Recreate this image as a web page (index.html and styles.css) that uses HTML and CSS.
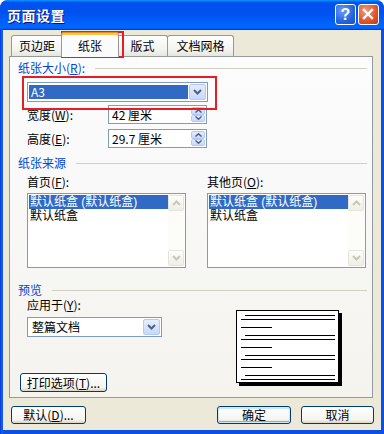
FILE: index.html
```html
<!DOCTYPE html>
<html>
<head>
  <meta charset="utf-8" />
  <title>页面设置</title>
  <link rel="stylesheet" href="styles.css">
</head>
<body>

<div class="window">
  <div class="titlebar">
    <span class="title">页面设置</span>
    <div class="caption-buttons">
      <span class="cap-btn help">?</span>
      <span class="cap-btn close">
        <svg width="19" height="19" viewBox="0 0 19 19"><path d="M5 5 L13 13 M13 5 L5 13" stroke="#fff" stroke-width="2.4" stroke-linecap="square"/></svg>
      </span>
    </div>
  </div>

  <div class="client">
    <div class="tabs">
      <span class="tab first">页边距</span>
      <span class="tab active">纸张</span>
      <span class="tab third">版式</span>
      <span class="tab fourth">文档网格</span>
    </div>

    <div class="panel">
      <div class="group-title"><span>纸张大小(<u>R</u>):</span></div>
      <div class="combo paper-size">
        <span class="combo-text selected">A3</span>
        <span class="drop-btn"><svg width="9" height="6" viewBox="0 0 9 6"><path d="M1 1 L4.5 4.5 L8 1" fill="none" stroke="#4D6185" stroke-width="2"/></svg></span>
      </div>

      <div class="field-row first-row">
        <span class="field-label">宽度(<u>W</u>):</span>
        <div class="spin">
          <span class="spin-value">42 厘米</span>
          <span class="spin-btns">
            <span class="spin-btn"><svg width="7" height="4" viewBox="0 0 7 4"><path d="M0.5 3.5 L3.5 0.8 L6.5 3.5" fill="none" stroke="#4D6185" stroke-width="1.5"/></svg></span>
            <span class="spin-btn"><svg width="7" height="4" viewBox="0 0 7 4"><path d="M0.5 0.5 L3.5 3.2 L6.5 0.5" fill="none" stroke="#4D6185" stroke-width="1.5"/></svg></span>
          </span>
        </div>
      </div>
      <div class="field-row">
        <span class="field-label">高度(<u>E</u>):</span>
        <div class="spin">
          <span class="spin-value">29.7 厘米</span>
          <span class="spin-btns">
            <span class="spin-btn"><svg width="7" height="4" viewBox="0 0 7 4"><path d="M0.5 3.5 L3.5 0.8 L6.5 3.5" fill="none" stroke="#4D6185" stroke-width="1.5"/></svg></span>
            <span class="spin-btn"><svg width="7" height="4" viewBox="0 0 7 4"><path d="M0.5 0.5 L3.5 3.2 L6.5 0.5" fill="none" stroke="#4D6185" stroke-width="1.5"/></svg></span>
          </span>
        </div>
      </div>

      <div class="group-title source-title"><span>纸张来源</span></div>
      <div class="sources">
        <div class="source">
          <div class="caption">首页(<u>F</u>):</div>
          <div class="listbox">
            <div class="items">
              <div class="item selected">默认纸盒 (默认纸盒)</div>
              <div class="item">默认纸盒</div>
            </div>
            <div class="vscroll">
              <span class="sb-btn"><svg width="9" height="6" viewBox="0 0 9 6"><path d="M1 5 L4.5 1.5 L8 5" fill="none" stroke="#C9C7BA" stroke-width="2"/></svg></span>
              <span class="sb-btn"><svg width="9" height="6" viewBox="0 0 9 6"><path d="M1 1 L4.5 4.5 L8 1" fill="none" stroke="#C9C7BA" stroke-width="2"/></svg></span>
            </div>
          </div>
        </div>
        <div class="source">
          <div class="caption">其他页(<u>O</u>):</div>
          <div class="listbox">
            <div class="items">
              <div class="item selected">默认纸盒 (默认纸盒)</div>
              <div class="item">默认纸盒</div>
            </div>
            <div class="vscroll">
              <span class="sb-btn"><svg width="9" height="6" viewBox="0 0 9 6"><path d="M1 5 L4.5 1.5 L8 5" fill="none" stroke="#C9C7BA" stroke-width="2"/></svg></span>
              <span class="sb-btn"><svg width="9" height="6" viewBox="0 0 9 6"><path d="M1 1 L4.5 4.5 L8 1" fill="none" stroke="#C9C7BA" stroke-width="2"/></svg></span>
            </div>
          </div>
        </div>
      </div>

      <div class="group-title preview-title"><span>预览</span></div>
      <div class="preview">
        <div class="preview-left">
          <div class="caption apply-label">应用于(<u>Y</u>):</div>
          <div class="combo apply-combo">
            <span class="combo-text">整篇文档</span>
            <span class="drop-btn"><svg width="9" height="6" viewBox="0 0 9 6"><path d="M1 1 L4.5 4.5 L8 1" fill="none" stroke="#4D6185" stroke-width="2"/></svg></span>
          </div>
          <span class="btn print-btn">打印选项(<u>T</u>)...</span>
        </div>
        <div class="page">
          <svg width="101" height="71" viewBox="0 0 101 71">
            <g stroke="#000" stroke-width="1">
              <path d="M8 4.5 H98 M4 8.5 H98 M4 16.5 H35"/>
              <path d="M8 24.5 H98 M4 28.5 H98 M4 36.5 H35"/>
              <path d="M8 44.5 H98 M4 48.5 H98 M4 56.5 H35"/>
              <path d="M8 64.5 H98 M4 68.5 H98"/>
            </g>
          </svg>
        </div>
      </div>
    </div>

    <div class="footer">
      <span class="btn default-btn">默认(<u>D</u>)...</span>
      <span class="spacer"></span>
      <span class="btn ok-btn">确定</span>
      <span class="btn cancel-btn">取消</span>
    </div>
  </div>

  <!-- red annotation boxes drawn over the dialog -->
  <div class="mark mark-tab"></div>
  <div class="mark mark-combo"></div>
</div>

</body>
</html>
```

FILE: styles.css
```css
* { box-sizing: border-box; }
body {
  margin: 0;
  background: #fff;
  font: 12px "Noto Sans CJK SC", sans-serif;
  color: #000;
}
u {
  text-decoration: underline;
}
.window {
  position: relative;
  width: 384px;
  height: 434px;
  display: flex;
  flex-direction: column;
  background: linear-gradient(to right, #0831D9, #166AEE 2px, #0B4FE3 3px);
  border-radius: 8px 8px 0 0;
  overflow: hidden;
}
.titlebar {
  flex: none;
  height: 30px;
  display: flex;
  align-items: center;
  padding: 0 5px 0 7px;
  background: linear-gradient(#0997FF, #0053EE 8%, #0050EE 40%, #0066FF 88%, #0066FF 93%, #005BFF 95%, #003DD7 96%, #003DD7);
}
.title {
  flex: 1;
  color: #fff;
  font-weight: bold;
  font-size: 14px;
  letter-spacing: 0.5px;
  text-shadow: 1px 1px #0F1089;
}
.caption-buttons {
  display: flex;
  gap: 2px;
  margin-top: -1px;
}
.cap-btn {
  width: 21px;
  height: 21px;
  border: 1px solid #fff;
  border-radius: 3px;
  display: flex;
  align-items: center;
  justify-content: center;
}
.help {
  background: radial-gradient(circle at 35% 30%, #6D9BF8, #2663DE 60%, #1A4FC7);
  color: #fff;
  font: bold 16px "Liberation Sans", sans-serif;
}
.close {
  background: radial-gradient(circle at 35% 30%, #F09A7A, #E0532A 60%, #C23A14);
}
.client {
  flex: 1;
  margin: 0 3px 4px;
  padding: 0 7px 0 6px;
  background: #ECE9D8;
  display: flex;
  flex-direction: column;
}
.tabs {
  height: 26px;
  display: flex;
  align-items: flex-end;
  padding-left: 2px;
}
.tab {
  height: 21px;
  border: 1px solid #919B9C;
  border-bottom: none;
  border-radius: 3px 3px 0 0;
  background: linear-gradient(#FFFFFF, #F3F3EF 70%, #E6E5DD);
  display: flex;
  align-items: center;
  justify-content: center;
  line-height: 14px;
}
.tab.first { width: 52px; }
.tab.third { width: 51px; }
.tab.fourth { width: 67px; margin-left: -1px; }
.tab.active {
  position: relative;
  z-index: 1;
  width: 58px;
  height: 25px;
  margin: 0 -2px -1px;
  background: #FCFCFE;
  border-top-color: #E68B2C;
  box-shadow: inset 0 2px #FFC83C;
  padding-top: 1px;
}
.panel {
  width: 364px;
  height: 342px;
  border: 1px solid #919B9C;
  background: linear-gradient(#FCFCFE, #F4F3EE);
  padding: 4px 0 0 8px;
  display: flex;
  flex-direction: column;
}
.group-title {
  height: 14px;
  line-height: 14px;
  margin-right: 5px;
  display: flex;
  align-items: center;
  color: #0046D5;
}
.group-title::after {
  content: "";
  flex: 1;
  border-top: 1px solid #D0D0BF;
  margin-left: 10px;
}
.combo {
  height: 20px;
  border: 1px solid #7F9DB9;
  background: #fff;
  padding: 1px;
  display: flex;
}
.combo-text {
  flex: 1;
  display: flex;
  align-items: center;
  padding-left: 2px;
  margin: 1px 1px 1px 0;
  line-height: 14px;
}
.combo-text.selected {
  background: #316AC5;
  color: #fff;
}
.drop-btn {
  width: 17px;
  border: 1px solid #B5C8F7;
  border-radius: 2px;
  background: linear-gradient(#E6EEFC, #C8D8FB);
  display: flex;
  align-items: center;
  justify-content: center;
}
.paper-size {
  width: 181px;
  margin: 7px 0 0 9px;
}
.field-row {
  display: flex;
  align-items: center;
  margin: 5px 0 0 9px;
}
.field-row.first-row {
  margin-top: 3px;
}
.field-label {
  width: 81px;
  line-height: 14px;
}
.spin {
  width: 99px;
  height: 19px;
  border: 1px solid #7F9DB9;
  background: #fff;
  display: flex;
}
.spin-value {
  flex: 1;
  display: flex;
  align-items: center;
  padding-left: 3px;
  line-height: 14px;
}
.spin-btns {
  width: 16px;
  padding: 1px;
  display: flex;
  flex-direction: column;
}
.spin-btn {
  flex: 1;
  border: 1px solid #B5C8F7;
  border-radius: 2px;
  background: linear-gradient(#E6EEFC, #C8D8FB);
  display: flex;
  align-items: center;
  justify-content: center;
}
.source-title {
  margin-top: 8px;
}
.sources {
  display: flex;
  gap: 21px;
  margin: 5px 0 0 9px;
}
.source {
  width: 159px;
}
.caption {
  height: 14px;
  line-height: 14px;
}
.listbox {
  height: 75px;
  margin-top: 4px;
  border: 1px solid #7F9DB9;
  background: #fff;
  display: flex;
}
.items {
  flex: 1;
  padding: 1px 0 0 1px;
}
.item {
  height: 14px;
  line-height: 14px;
  font-family: "Liberation Sans", "Noto Sans CJK SC", sans-serif;
  white-space: nowrap;
  padding-left: 1px;
}
.item.selected {
  background: #316AC5;
  color: #fff;
}
.vscroll {
  width: 17px;
  padding: 1px 1px 1px 0;
  display: flex;
  flex-direction: column;
  justify-content: space-between;
  background: #FCFCF9;
}
.sb-btn {
  height: 16px;
  border: 1px solid #E5E4DD;
  border-radius: 2px;
  background: linear-gradient(#FDFDFB, #EFEEE7);
  display: flex;
  align-items: center;
  justify-content: center;
}
.preview-title {
  margin-top: 15px;
}
.preview {
  display: flex;
}
.preview-left {
  width: 218px;
  display: flex;
  flex-direction: column;
  align-items: flex-start;
}
.apply-label {
  margin: 1px 0 0 9px;
}
.apply-combo {
  width: 135px;
  margin: 5px 0 0 9px;
}
.apply-combo .combo-text {
  padding-left: 3px;
}
.page {
  width: 103px;
  height: 73px;
  margin-top: 13px;
  border: 1px solid #000;
  background: #fff;
  box-shadow: 3px 3px 0 #000;
}
.page svg {
  display: block;
}
.btn {
  height: 18px;
  border: 1px solid #003C74;
  border-radius: 3px;
  background: linear-gradient(#FFFFFF, #F5F4EE 80%, #D8D2C6);
  display: flex;
  align-items: center;
  justify-content: center;
  line-height: 14px;
  white-space: nowrap;
}
.print-btn {
  width: 87px;
  height: 19px;
  margin: 36px 0 0 2px;
}
.footer {
  display: flex;
  margin-top: 8px;
  padding-left: 2px;
}
.footer .spacer {
  flex: 1;
}
.default-btn { width: 75px; }
.ok-btn {
  width: 74px;
  margin-right: 10px;
  box-shadow: inset 0 0 0 1px #CEE7FF, inset 0 -2px 0 #89ADE4, inset 0 2px 0 #CEE7FF;
}
.cancel-btn { width: 73px; }
.mark {
  position: absolute;
  border: 2px solid #E51E24;
}
.mark-tab {
  left: 61px;
  top: 31px;
  width: 63px;
  height: 27px;
}
.mark-combo {
  left: 22px;
  top: 76px;
  width: 195px;
  height: 34px;
}
```
